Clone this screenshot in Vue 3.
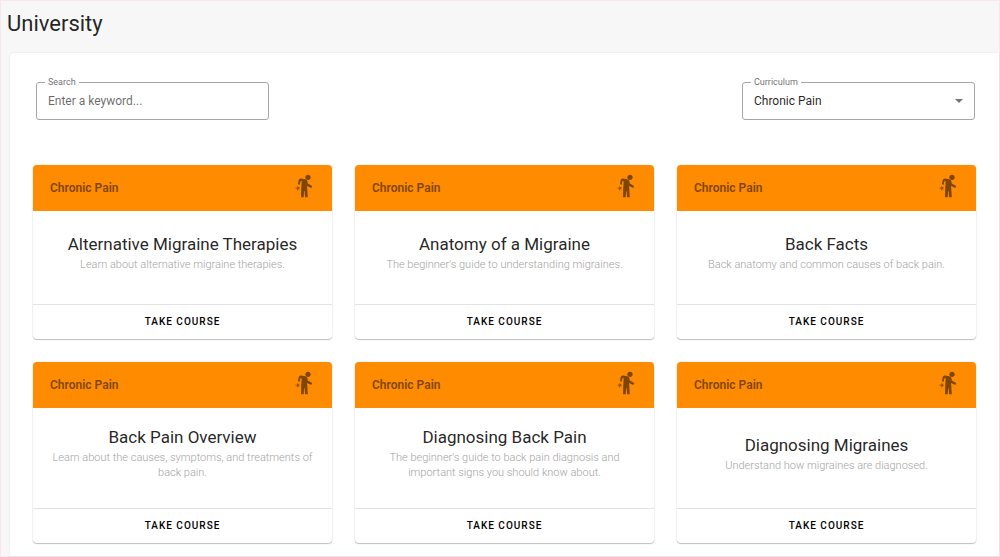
<script setup>
import { ref, computed } from 'vue'

const keyword = ref('')
const curriculum = ref('Chronic Pain')

const courses = [
  { title: 'Alternative Migraine Therapies', text: 'Learn about alternative migraine therapies.' },
  { title: 'Anatomy of a Migraine', text: "The beginner's guide to understanding migraines." },
  { title: 'Back Facts', text: 'Back anatomy and common causes of back pain.' },
  { title: 'Back Pain Overview', text: 'Learn about the causes, symptoms, and treatments of back pain.' },
  { title: 'Diagnosing Back Pain', text: "The beginner's guide to back pain diagnosis and important signs you should know about." },
  { title: 'Diagnosing Migraines', text: 'Understand how migraines are diagnosed.' },
]

const visible = computed(() =>
  courses.filter((c) => c.title.toLowerCase().includes(keyword.value.toLowerCase()))
)
</script>

<template>
  <div class="page">
    <h1 class="heading">University</h1>
    <main class="panel">
      <div class="filters">
        <fieldset class="field">
          <legend><label for="search">Search</label></legend>
          <input id="search" v-model="keyword" type="text" placeholder="Enter a keyword..." />
        </fieldset>
        <fieldset class="field">
          <legend><label for="curriculum">Curriculum</label></legend>
          <select id="curriculum" v-model="curriculum">
            <option>Chronic Pain</option>
          </select>
          <svg class="arrow" viewBox="0 0 8 4" aria-hidden="true"><path d="M0 0h8L4 4z" /></svg>
        </fieldset>
      </div>
      <div class="grid">
        <article v-for="course in visible" :key="course.title" class="card">
          <header class="card-head">
            <span>Chronic Pain</span>
            <svg class="figure" viewBox="0 0 20 24" aria-hidden="true">
              <circle cx="14" cy="3.300" r="2.600" />
              <path d="M7 4.500L11.500 5.200Q13.200 5.600 13.400 7.200L13.800 9.600L18.200 12.100L17.400 13.900L13 11.900L13.300 15L13.800 23.300H11.100L10.500 17H10.100L9.700 23.300H7L7.200 15L7.700 7.200L6.500 7L5.700 10.800L3.900 10.300L4.700 6.100Q5.200 4.300 7 4.500Z" />
              <path d="M3.400 11.800L4.400 13L5.800 12.700L5.100 14.100L5.800 15.500L4.500 15.200L3.300 16.900L3.100 14.900L.8 14.100L3.200 13.500Z" opacity=".8" />
            </svg>
          </header>
          <div class="card-body">
            <h2>{{ course.title }}</h2>
            <p>{{ course.text }}</p>
          </div>
          <button type="button" class="action">TAKE COURSE</button>
        </article>
      </div>
    </main>
  </div>
</template>

<style>
body {
  margin: 0;
}
</style>

<style scoped>
.page {
  box-sizing: border-box;
  min-height: 100vh;
  display: flex;
  flex-direction: column;
  border: 1px solid #fce4ec;
  background: #f7f7f7;
  color: rgba(0, 0, 0, 0.87);
  font-family: Roboto, "Liberation Sans", sans-serif;
}

.heading {
  margin: 0;
  padding: 9px 6px 15px;
  font-size: 22px;
  line-height: 28px;
  font-weight: 400;
}

.panel {
  flex: 1;
  margin-left: 9px;
  padding: 24px 23px 12px;
  border-radius: 4px 0 0 0;
  background: #fff;
  box-shadow: 0 0 2px rgba(0, 0, 0, 0.1);
}

.filters {
  display: flex;
  justify-content: space-between;
  gap: 24px;
  padding: 0 1px 0 3px;
  margin-bottom: 45px;
}

.field {
  position: relative;
  box-sizing: border-box;
  width: 233px;
  min-width: 0;
  margin: 0;
  padding: 0;
  border: 1px solid #a6a6a6;
  border-radius: 3px;
}

.field legend {
  margin-left: 8px;
  padding: 0 3px;
  font-size: 9px;
  line-height: 10px;
  color: rgba(0, 0, 0, 0.6);
}

.field input,
.field select {
  display: block;
  box-sizing: border-box;
  width: 100%;
  height: 32px;
  margin: 0;
  padding: 0 11px 5px;
  border: 0;
  outline: 0;
  background: transparent;
  appearance: none;
  color: rgba(0, 0, 0, 0.87);
  font: 400 12px/16px Roboto, "Liberation Sans", sans-serif;
}

.field input::placeholder {
  color: rgba(0, 0, 0, 0.6);
  opacity: 1;
}

.arrow {
  position: absolute;
  right: 11px;
  top: 12px;
  width: 8px;
  height: 4px;
  fill: #757575;
  pointer-events: none;
}

.grid {
  display: grid;
  grid-template-columns: repeat(3, minmax(0, 1fr));
  gap: 23px;
}

.card {
  display: flex;
  flex-direction: column;
  overflow: hidden;
  border-radius: 4px;
  background: #fff;
  box-shadow: 0 1px 1px rgba(0, 0, 0, 0.22), 0 0 2px rgba(0, 0, 0, 0.14);
}

.card-head {
  display: flex;
  align-items: center;
  justify-content: space-between;
  height: 46px;
  padding: 0 18px 0 17px;
  background: #ff8c00;
  color: #7f4600;
  font-size: 12px;
  line-height: 16px;
  font-weight: 600;
}

.figure {
  width: 20px;
  height: 24px;
  margin-bottom: 4px;
  fill: currentColor;
}

.card-body {
  flex: 1;
  box-sizing: border-box;
  min-height: 93px;
  display: flex;
  flex-direction: column;
  justify-content: center;
  gap: 1px;
  padding: 17px 17px 28px;
  text-align: center;
}

.card-body h2 {
  margin: 0;
  font-size: 17px;
  line-height: 24px;
  font-weight: 400;
}

.card-body p {
  margin: 0;
  font-size: 11px;
  line-height: 15px;
  font-weight: 300;
  color: #a3a3a3;
}

.action {
  height: 35px;
  padding: 0 0 1px;
  border: 0;
  border-top: 1px solid #e3e3e3;
  background: transparent;
  color: #000;
  font: 500 10px/14px Roboto, "Liberation Sans", sans-serif;
  letter-spacing: 1px;
  cursor: pointer;
}
</style>
